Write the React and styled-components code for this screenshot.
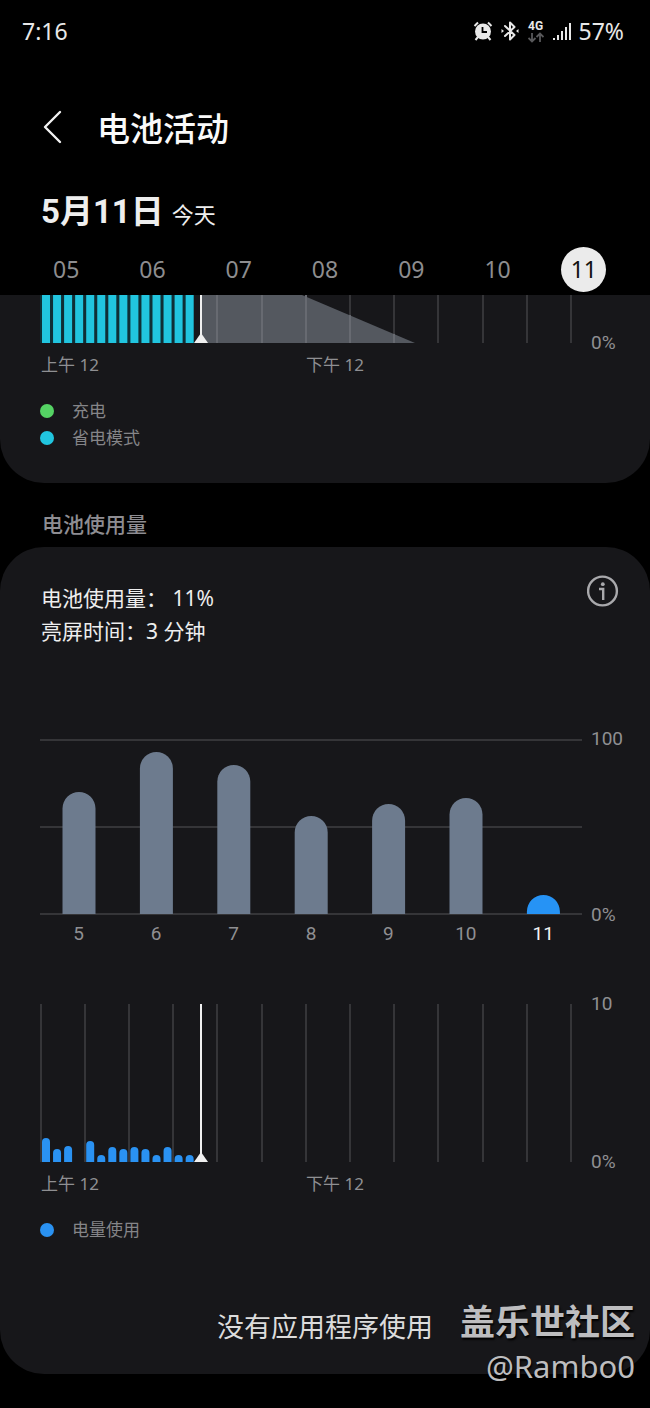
import React from "react";
import styled, { createGlobalStyle } from "styled-components";

const GlobalStyle = createGlobalStyle`
  * {
    box-sizing: border-box;
  }

  body {
    margin: 0;
    background: #000;
    color: #eee;
    font-family: "Noto Sans", "Noto Sans CJK SC", sans-serif;
  }

  h1, h2, p, ul {
    margin: 0;
    padding: 0;
  }

  button {
    border: 0;
    padding: 0;
    background: none;
    color: inherit;
    font: inherit;
    cursor: pointer;
  }

  svg {
    display: block;
  }
`;

const Page = styled.div`
  position: relative;
  padding-bottom: 34px;
  background: #000;
`;

const StatusBar = styled.div`
  display: flex;
  align-items: center;
  justify-content: space-between;
  height: 62px;
  padding: 0 26px 0 22px;
  font-size: 23px;
  color: #e8e8e8;
`;

const StatusIcons = styled.div`
  display: flex;
  align-items: center;
  gap: 8px;
`;

const Network = styled.div`
  display: flex;
  flex-direction: column;
  align-items: center;
  width: 18px;
  font-family: Roboto, sans-serif;
  font-size: 12px;
  font-weight: 700;
  line-height: 12px;
`;

const Header = styled.header`
  display: flex;
  align-items: center;
  gap: 35px;
  height: 134px;
  padding-left: 42px;
`;

const BackButton = styled.button`
  padding-bottom: 4px;
`;

const Title = styled.h1`
  font-size: 33px;
  font-weight: 500;
  line-height: 40px;
  color: #fafafa;
`;

const DateHeading = styled.h2`
  display: flex;
  align-items: baseline;
  gap: 8px;
  height: 32px;
  padding-left: 41px;
  font-family: Roboto, "Noto Sans CJK SC", sans-serif;
  font-size: 33px;
  font-weight: 700;
  line-height: 32px;
`;

const Today = styled.span`
  font-size: 22px;
  font-weight: 400;
`;

const DayPicker = styled.nav`
  display: grid;
  grid-template-columns: repeat(7, 1fr);
  justify-items: center;
  padding: 19px 23px 3px;
`;

const DayButton = styled.button`
  width: 45px;
  height: 45px;
  border-radius: 50%;
  font-size: 23px;
  line-height: 45px;
  background: ${(props) => (props.$active ? "#ebebeb" : "transparent")};
  color: ${(props) => (props.$active ? "#111" : "#8d8d8f")};
`;

const Card = styled.section`
  padding-bottom: ${(props) => (props.$scrolled ? "32px" : "27px")};
  border-radius: ${(props) => (props.$scrolled ? "0 0 44px 44px" : "44px")};
  background: #17171a;
`;

const SectionTitle = styled.h2`
  padding: 18px 42px 0;
  font-size: 21px;
  font-weight: 500;
  line-height: 46px;
  color: #8e8d92;
`;

const Summary = styled.div`
  display: flex;
  align-items: flex-start;
  justify-content: space-between;
  padding: 28px 31px 0 41px;
`;

const SummaryText = styled.div`
  padding-top: 7px;
  font-size: 21px;
  line-height: 33px;
`;

const ChartRow = styled.div`
  display: flex;
  gap: 9px;
  padding-left: 40px;
  margin-top: ${(props) => props.$top || 0}px;
`;

const Plot = styled.div`
  flex: 1;

  svg {
    width: 100%;
    height: auto;
  }
`;

const ScaleLabels = styled.div`
  display: flex;
  flex-direction: column;
  justify-content: ${(props) => (props.$single ? "flex-end" : "space-between")};
  width: 59px;
  margin: -11px 0;
  font-family: Roboto, sans-serif;
  font-size: 19px;
  line-height: 22px;
  color: #8f8f92;
`;

const DayLabels = styled.div`
  display: grid;
  grid-template-columns: repeat(7, 1fr);
  margin: 0 68px 0 40px;
  text-align: center;
  font-family: Roboto, sans-serif;
  font-size: 19px;
  line-height: 38px;
`;

const DayLabel = styled.span`
  color: ${(props) => (props.$active ? "#f2f2f2" : "#8f8f92")};
`;

const HourLabels = styled.div`
  display: grid;
  grid-template-columns: 49% 51%;
  margin: 0 68px 0 41px;
  font-size: 17px;
  line-height: 44px;
  color: #8f8f92;
`;

const Legend = styled.ul`
  list-style: none;
  padding: 10px 40px 0;
`;

const LegendItem = styled.li`
  display: flex;
  align-items: center;
  gap: 18px;
  font-size: 17px;
  line-height: 27px;
  color: #858588;

  &::before {
    content: "";
    width: 14px;
    height: 14px;
    border-radius: 50%;
    background: ${(props) => props.$color};
  }
`;

const EmptyText = styled.p`
  margin-top: 64px;
  text-align: center;
  font-size: 27px;
  line-height: 40px;
  color: #dcdcdc;
`;

const Watermark = styled.div`
  position: absolute;
  right: 15px;
  bottom: 20px;
  text-align: right;
  font-size: 31px;
  line-height: 44px;
  color: #bdbdbf;
  text-shadow: 1px 2px 2px #000;
`;

const WatermarkName = styled.div`
  font-size: 35px;
  font-weight: 700;
`;

const days = ["05", "06", "07", "08", "09", "10", "11"];

const dailyUsage = [
  { day: 5, height: 122 },
  { day: 6, height: 162 },
  { day: 7, height: 149 },
  { day: 8, height: 98 },
  { day: 9, height: 110 },
  { day: 10, height: 116 },
  { day: 11, height: 19, active: true },
];

const halfHourUsage = [24, 13, 16, 0, 21, 7, 15, 13, 15, 13, 7, 15, 7, 7];

const SLOT = 11.05;

// bar with a rounded top and a flat foot
const barPath = (x, bottom, width, height) => {
  const r = width / 2;
  return `M${x} ${bottom}V${bottom - height + r}a${r} ${r} 0 0 1 ${width} 0V${bottom}z`;
};

const AlarmIcon = () => (
  <svg width="20" height="20" viewBox="0 0 20 20" fill="none">
    <circle cx="10" cy="10.5" r="8" fill="#e8e8e8" />
    <path d="M1.500 5 5 1.500M18.500 5 15 1.500M5 16l-2.500 3M15 16l2.500 3" stroke="#e8e8e8" strokeWidth="2" />
    <path d="M9.500 6V11H14" stroke="#000" strokeWidth="1.800" />
  </svg>
);

const BluetoothIcon = () => (
  <svg width="18" height="20" viewBox="0 0 18 20" fill="none" stroke="#e8e8e8" strokeWidth="2" strokeLinejoin="round" strokeLinecap="round">
    <path d="M4 5 13.500 14 9 18.500V1.500L13.500 6 4 15" />
    <path d="M.5 8 3 10 .5 12zM17.500 8 15 10l2.500 2z" fill="#e8e8e8" stroke="none" />
  </svg>
);

const DataArrows = () => (
  <svg width="16" height="11" viewBox="0 0 16 11" fill="none" stroke="#59595b" strokeWidth="1.800">
    <path d="M4 1v8.500M.5 6l3.500 3.500L7.500 6M12 10V1.500M8.500 5 12 1.500 15.500 5" />
  </svg>
);

const SignalIcon = () => (
  <svg width="18" height="18" viewBox="0 0 18 18" fill="#e8e8e8">
    <path d="M0 16h2v2H0zM4 13h2v5H4zM8 9h2v9H8zM12 5h2v13h-2zM16 1h2v17h-2z" />
  </svg>
);

const BackIcon = () => (
  <svg width="20" height="34" viewBox="0 0 20 34" fill="none" stroke="#f2f2f2" strokeWidth="2.400" strokeLinecap="round" strokeLinejoin="round">
    <path d="M18 2 3 17l15 15" />
  </svg>
);

const InfoIcon = () => (
  <svg width="32" height="32" viewBox="0 0 32 32" fill="none" stroke="#a9a9ac" strokeWidth="2.400">
    <circle cx="15.500" cy="16" r="14.400" />
    <path d="M12 14H16.200V25" />
    <circle cx="15.800" cy="9.200" r="1.900" fill="#a9a9ac" stroke="none" />
  </svg>
);

const HourGrid = ({ height, color }) =>
  Array.from({ length: 13 }, (_, i) => (
    <rect key={i} x={Math.floor(i * 44.2)} y="0" width="2" height={height} fill={color} />
  ));

const NowMarker = ({ height }) => (
  <g fill="#f0f0f0">
    <rect x="160" y="0" width="2" height={height} />
    <path d={`M161 ${height - 10}l7 10h-14z`} />
  </g>
);

const LevelChart = () => (
  <svg viewBox="0 0 542 48" role="img" aria-label="电池电量">
    <HourGrid height={48} color="#353538" />
    <rect width="154" height="48" fill="#0f2f36" />
    {halfHourUsage.map((_, i) => (
      <rect key={i} x={2 + i * SLOT} width="8" height="48" fill="#21c5df" />
    ))}
    <path d="M161 0H262L375 48H161z" fill="#54585f" />
    {[4, 5, 6, 7, 8].map((i) => (
      <rect key={i} x={Math.floor(i * 44.2)} y={i < 7 ? 0 : (i * 44.2 - 262) * 0.425} width="2" height="48" fill="#676a71" />
    ))}
    <NowMarker height={48} />
  </svg>
);

const DailyChart = () => (
  <svg viewBox="0 0 542 176" role="img" aria-label="每日电池使用量">
    <path d="M0 1h542M0 88h542M0 175h542" stroke="#353538" strokeWidth="2" />
    {dailyUsage.map((item, i) => (
      <path
        key={item.day}
        d={barPath(22.5 + i * 77.4, 175, 33, item.height)}
        fill={item.active ? "#2693f5" : "#6d7b8e"}
      />
    ))}
  </svg>
);

const HourlyChart = () => (
  <svg viewBox="0 0 542 158" role="img" aria-label="每小时电量使用">
    <HourGrid height={158} color="#353538" />
    {halfHourUsage.map((height, i) =>
      height ? <path key={i} d={barPath(2 + i * SLOT, 158, 8, height)} fill="#2a92f2" /> : null
    )}
    <NowMarker height={158} />
  </svg>
);

const HourAxis = () => (
  <HourLabels>
    <span>上午 12</span>
    <span>下午 12</span>
  </HourLabels>
);

const App = () => {
  return (
    <Page>
      <GlobalStyle />
      <StatusBar>
        <span>7:16</span>
        <StatusIcons>
          <AlarmIcon />
          <BluetoothIcon />
          <Network>
            4G
            <DataArrows />
          </Network>
          <SignalIcon />
          <span>57%</span>
        </StatusIcons>
      </StatusBar>

      <Header>
        <BackButton aria-label="返回">
          <BackIcon />
        </BackButton>
        <Title>电池活动</Title>
      </Header>

      <DateHeading>
        5月11日 <Today>今天</Today>
      </DateHeading>
      <DayPicker>
        {days.map((day) => (
          <DayButton key={day} $active={day === "11"}>
            {day}
          </DayButton>
        ))}
      </DayPicker>

      <Card $scrolled>
        <ChartRow>
          <Plot>
            <LevelChart />
          </Plot>
          <ScaleLabels $single>
            <span>0%</span>
          </ScaleLabels>
        </ChartRow>
        <HourAxis />
        <Legend>
          <LegendItem $color="#55d364">充电</LegendItem>
          <LegendItem $color="#21c5df">省电模式</LegendItem>
        </Legend>
      </Card>

      <SectionTitle>电池使用量</SectionTitle>

      <Card>
        <Summary>
          <SummaryText>
            <p>电池使用量： 11%</p>
            <p>亮屏时间：3 分钟</p>
          </SummaryText>
          <button aria-label="信息">
            <InfoIcon />
          </button>
        </Summary>

        <ChartRow $top={91}>
          <Plot>
            <DailyChart />
          </Plot>
          <ScaleLabels>
            <span>100</span>
            <span>0%</span>
          </ScaleLabels>
        </ChartRow>
        <DayLabels>
          {dailyUsage.map((item) => (
            <DayLabel key={item.day} $active={item.active}>
              {item.day}
            </DayLabel>
          ))}
        </DayLabels>

        <ChartRow $top={51}>
          <Plot>
            <HourlyChart />
          </Plot>
          <ScaleLabels>
            <span>10</span>
            <span>0%</span>
          </ScaleLabels>
        </ChartRow>
        <HourAxis />
        <Legend>
          <LegendItem $color="#2a92f2">电量使用</LegendItem>
        </Legend>

        <EmptyText>没有应用程序使用</EmptyText>
      </Card>

      <Watermark>
        <WatermarkName>盖乐世社区</WatermarkName>
        <div>@Rambo0</div>
      </Watermark>
    </Page>
  );
};

export default App;
